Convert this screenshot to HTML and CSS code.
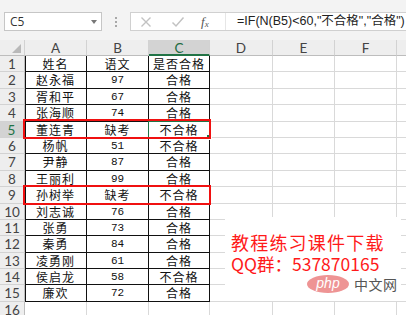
FILE: index.html
```html
<!DOCTYPE html>
<html>
<head>
<meta charset="utf-8">
<link rel="stylesheet" href="styles.css">
</head>
<body>
<div class="app">
  <div class="toolbar">
    <div class="namebox"><span class="nb-text">C5</span><span class="nb-arrow"></span></div>
    <div class="dots"><i></i><i></i><i></i></div>
    <div class="fbar">
      <div class="fbtns">
        <svg class="ico" width="12" height="12" viewBox="0 0 12 12"><path d="M1.5 1.5 L10.5 10.5 M10.5 1.5 L1.5 10.5" stroke="#c2c2c2" stroke-width="1.4" fill="none"/></svg>
        <svg class="ico" width="14" height="12" viewBox="0 0 14 12"><path d="M1.5 6.5 L5 10 L12.5 1.5" stroke="#c2c2c2" stroke-width="1.5" fill="none"/></svg>
        <span class="fx">f<sub>x</sub></span>
      </div>
      <div class="formula">=IF(N(B5)&lt;60,"不合格","合格")</div>
    </div>
  </div>
  <div class="sheet">
    <div class="corner"><span class="tri"></span></div><div class="ch">A</div><div class="ch">B</div><div class="ch chsel">C</div><div class="ch">D</div><div class="ch">E</div><div class="ch">F</div><div class="ch"></div>

    <div class="rh">1</div><div class="t ta t1">姓名</div><div class="t t1">语文</div><div class="t t1">是否合格</div><div class="c"></div><div class="c"></div><div class="c"></div><div class="c"></div>
    <div class="rh">2</div><div class="t ta">赵永福</div><div class="t n">97</div><div class="t">合格</div><div class="c"></div><div class="c"></div><div class="c"></div><div class="c"></div>
    <div class="rh">3</div><div class="t ta">胥和平</div><div class="t n">67</div><div class="t">合格</div><div class="c"></div><div class="c"></div><div class="c"></div><div class="c"></div>
    <div class="rh">4</div><div class="t ta">张海顺</div><div class="t n">74</div><div class="t">合格</div><div class="c"></div><div class="c"></div><div class="c"></div><div class="c"></div>
    <div class="rh rhsel">5</div><div class="t ta">董连青</div><div class="t">缺考</div><div class="t">不合格</div><div class="c"></div><div class="c"></div><div class="c"></div><div class="c"></div>
    <div class="rh">6</div><div class="t ta">杨帆</div><div class="t n">51</div><div class="t">不合格</div><div class="c"></div><div class="c"></div><div class="c"></div><div class="c"></div>
    <div class="rh">7</div><div class="t ta">尹静</div><div class="t n">87</div><div class="t">合格</div><div class="c"></div><div class="c"></div><div class="c"></div><div class="c"></div>
    <div class="rh">8</div><div class="t ta">王丽利</div><div class="t n">99</div><div class="t">合格</div><div class="c"></div><div class="c"></div><div class="c"></div><div class="c"></div>
    <div class="rh">9</div><div class="t ta">孙树举</div><div class="t">缺考</div><div class="t">不合格</div><div class="c"></div><div class="c"></div><div class="c"></div><div class="c"></div>
    <div class="rh">10</div><div class="t ta">刘志诚</div><div class="t n">76</div><div class="t">合格</div><div class="c"></div><div class="c"></div><div class="c"></div><div class="c"></div>
    <div class="rh">11</div><div class="t ta">张勇</div><div class="t n">73</div><div class="t">合格</div><div class="c"></div><div class="c"></div><div class="c"></div><div class="c"></div>
    <div class="rh">12</div><div class="t ta">秦勇</div><div class="t n">84</div><div class="t">合格</div><div class="c"></div><div class="c"></div><div class="c"></div><div class="c"></div>
    <div class="rh">13</div><div class="t ta">凌勇刚</div><div class="t n">61</div><div class="t">合格</div><div class="c"></div><div class="c"></div><div class="c"></div><div class="c"></div>
    <div class="rh">14</div><div class="t ta">侯启龙</div><div class="t n">58</div><div class="t">不合格</div><div class="c"></div><div class="c"></div><div class="c"></div><div class="c"></div>
    <div class="rh">15</div><div class="t ta">廉欢</div><div class="t n">72</div><div class="t">合格</div><div class="c"></div><div class="c"></div><div class="c"></div><div class="c"></div>
    <div class="rh">16</div><div class="c"></div><div class="c"></div><div class="c"></div><div class="c"></div><div class="c"></div><div class="c"></div><div class="c"></div>

    <div class="selbox"><span class="handle"></span></div>
    <div class="redbox r5"></div>
    <div class="redbox r9"></div>

    <div class="watermark">
      <div class="wm-line">教程练习课件下载</div>
      <div class="wm-line wm-qq">QQ群：537870165</div>
      <div class="php"><span class="php-oval">php</span><span class="php-cn">中文网</span></div>
    </div>
  </div>
</div>
</body>
</html>
```

FILE: styles.css
```css
html, body {
  margin: 0;
  padding: 0;
  background: #fff;
}
.app {
  width: 406px;
  height: 315px;
  overflow: hidden;
  font-family: "Noto Sans CJK SC", sans-serif;
}
.toolbar {
  height: 40px;
  background: #f3f3f3;
  display: flex;
  align-items: flex-start;
  padding-top: 12px;
  box-sizing: border-box;
  padding-left: 4px;
}
.namebox {
  flex: 0 0 98px;
  height: 19px;
  box-sizing: border-box;
  background: #fff;
  border: 1px solid #c6c6c6;
  display: flex;
  align-items: center;
  justify-content: space-between;
  padding: 0 4px 0 5px;
}
.nb-text {
  font-family: "Open Sans", "Liberation Sans", sans-serif;
  font-size: 12px;
  color: #333;
}
.nb-arrow {
  width: 0;
  height: 0;
  border-left: 3.5px solid transparent;
  border-right: 3.5px solid transparent;
  border-top: 4px solid #777;
}
.dots {
  flex: 0 0 28px;
  height: 19px;
  display: flex;
  flex-direction: column;
  align-items: center;
  justify-content: center;
  gap: 2px;
}
.dots i {
  display: block;
  width: 2px;
  height: 2px;
  background: #a8a8a8;
}
.fbar {
  flex: 1 1 auto;
  min-width: 0;
  overflow: hidden;
  height: 19px;
  display: flex;
  background: #fff;
  border: 1px solid #d0d0d0;
  border-right: none;
  box-sizing: border-box;
}
.fbtns {
  flex: 0 0 95px;
  display: flex;
  align-items: center;
  padding-left: 9px;
  gap: 19px;
  box-sizing: border-box;
  border-right: 1px solid #e6e6e6;
}
.fx {
  font-family: "Liberation Serif", serif;
  font-style: italic;
  font-size: 13px;
  color: #555;
  margin-left: -3px;
}
.fx sub {
  font-size: 9px;
  vertical-align: -1px;
}
.formula {
  padding-left: 11px;
  font-family: "Liberation Sans", "Noto Sans CJK SC", sans-serif;
  font-size: 12.5px;
  line-height: 17px;
  color: #222;
  white-space: nowrap;
}
.sheet {
  position: relative;
  display: grid;
  grid-template-columns: 25px 62px 62px 61px 63px 62px 62px 20px;
  grid-template-rows: 16px;
  grid-auto-rows: 16.4px;
}
.sheet > div {
  box-sizing: border-box;
}
.corner, .ch {
  background: #eeeeee;
  border-right: 1px solid #d2d2d2;
  border-bottom: 1px solid #bdbdbd;
}
.corner {
  position: relative;
}
.tri {
  position: absolute;
  right: 3px;
  bottom: 2px;
  width: 0;
  height: 0;
  border-left: 9px solid transparent;
  border-bottom: 9px solid #b9b9b9;
}
.ch {
  font-family: "Lato", "Liberation Sans", sans-serif;
  font-size: 13.5px;
  color: #444;
  text-align: center;
  line-height: 16px;
}
.chsel {
  background: #d3d3d3;
  color: #1e6b41;
  border-bottom: 2px solid #217346;
}
.rh {
  background: #eeeeee;
  border-right: 1px solid #bdbdbd;
  border-bottom: 1px solid #d2d2d2;
  font-family: "Lato", "Liberation Sans", sans-serif;
  font-size: 13.5px;
  color: #444;
  text-align: center;
  line-height: 16px;
}
.rhsel {
  background: #d3d3d3;
  color: #217346;
  border-right: 2px solid #217346;
}
.c {
  border-right: 1px solid #d9d9d9;
  border-bottom: 1px solid #d9d9d9;
}
.t {
  border-right: 1px solid #111;
  border-bottom: 1px solid #111;
  text-align: center;
  font-size: 12px;
  line-height: 16px;
  color: #111;
  letter-spacing: 1px;
  white-space: nowrap;
}
.ta {
  box-shadow: inset 1px 0 0 #111;
}
.n {
  font-family: "Liberation Mono", monospace;
  font-size: 11px;
  letter-spacing: 0;
}
.selbox {
  position: absolute;
  left: 148px;
  top: 81px;
  width: 62px;
  height: 17.4px;
  border: 1px solid #217346;
  box-sizing: border-box;
}
.handle {
  position: absolute;
  right: -3px;
  bottom: -3px;
  width: 4px;
  height: 4px;
  background: #217346;
  border: 1px solid #fff;
}
.redbox {
  position: absolute;
  left: 22.5px;
  width: 188.5px;
  height: 20px;
  border: 2.5px solid #f01010;
  box-sizing: border-box;
}
.r5 {
  top: 79.2px;
}
.r9 {
  top: 144.8px;
}
.watermark {
  position: absolute;
  left: 225px;
  top: 177px;
  width: 176px;
  height: 84px;
  background: #fff;
  padding: 15px 0 0 6px;
  box-sizing: border-box;
  display: flex;
  flex-direction: column;
}
.wm-line {
  height: 21px;
  font-family: "Noto Sans CJK SC", sans-serif;
  font-size: 18px;
  line-height: 21px;
  letter-spacing: 1.2px;
  color: #ff1a1a;
  white-space: nowrap;
}
.wm-qq {
  letter-spacing: 0;
  font-size: 17.5px;
}
.php {
  height: 18px;
  display: flex;
  align-items: center;
  margin-left: 76px;
  margin-top: 1px;
  gap: 5px;
}
.php-oval {
  width: 42px;
  height: 18px;
  border-radius: 50%;
  background: #ee9494;
  color: #fff;
  font-family: "Liberation Sans", sans-serif;
  font-style: italic;
  font-size: 14px;
  line-height: 17px;
  text-align: center;
}
.php-cn {
  font-size: 14px;
  line-height: 18px;
  color: #555;
  letter-spacing: 0.5px;
}
```
